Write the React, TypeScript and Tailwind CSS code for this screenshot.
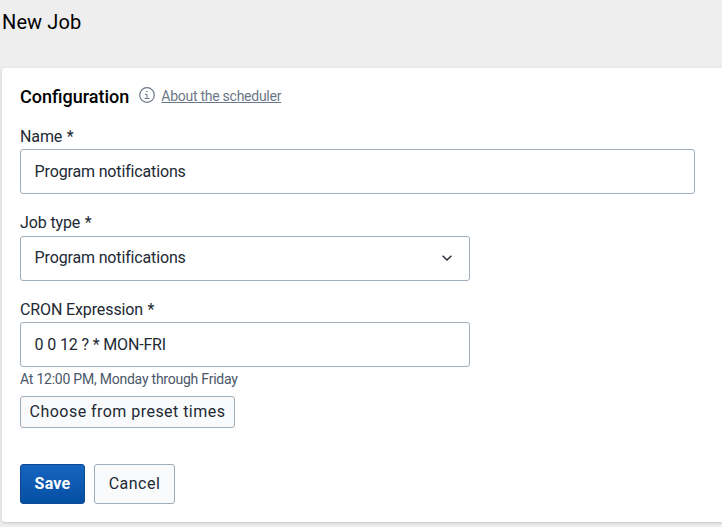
import React from 'react';

function Field({ label, value, wide, select }: { label: string; value: string; wide?: boolean; select?: boolean }) {
  return (
    <div className="flex flex-col">
      <label className={`h-[22px] text-base tracking-[-.12px] text-[#212934] ${select ? 'leading-[18px]' : 'leading-[19px]'}`}>
        {label}
        <span className="ml-[4.6px]">*</span>
      </label>
      <div className={`flex h-[45px] items-center justify-between rounded-[3px] border border-[#a0adba] bg-white pl-[13.6px] pr-[14px] text-base tracking-[-.15px] text-[#212934] ${wide ? 'w-[675px]' : 'w-[450px]'}`}>
        <span>{value}</span>
        {select && (
          <svg width="16" height="16" viewBox="0 0 16 16" fill="none" stroke="#212934" strokeWidth="1.4">
            <path d="M3.6 5.8l4.4 4.2 4.4-4.2" />
          </svg>
        )}
      </div>
    </div>
  );
}

export default function App() {
  return (
    <div className="h-[527px] w-[722px] overflow-hidden bg-[#eeeeee] font-['Roboto',sans-serif]">
      <h1 className="h-[68px] pl-[2px] pt-[10px] text-xl leading-6 tracking-[.12px] text-black">New Job</h1>
      <main className="ml-[2px] h-[454px] w-[730px] rounded-[3px] bg-white pl-[18px] pt-[17px] shadow-[0_1px_3px_rgba(64,75,90,0.25)]">
        <div className="flex h-[42px] items-start">
          <h2 className="text-lg font-medium leading-6 text-black">Configuration</h2>
          <svg className="ml-[10px] mt-[2px]" width="16" height="16" viewBox="0 0 16 16" fill="none" stroke="#6c7787">
            <circle cx="8" cy="8" r="7.3" strokeWidth="1.2" />
            <path d="M6 7.5h2v4M5.5 11.5h5M7 4.5h1.5" />
          </svg>
          <a className="ml-[6px] text-sm leading-[23px] tracking-[-.26px] text-[#6c7787] underline">About the scheduler</a>
        </div>
        <div className="flex flex-col gap-[19.6px]">
          <Field label="Name" value="Program notifications" wide />
          <Field label="Job type" value="Program notifications" select />
          <Field label="CRON Expression" value="0 0 12 ? * MON-FRI" />
        </div>
        <p className="mt-[3.8px] text-sm leading-4 tracking-[-.23px] text-[#4a5768]">At 12:00 PM, Monday through Friday</p>
        <button className="mt-[9px] block h-8 w-[215px] rounded-[3px] border border-[#a0adba] bg-[#f9fafb] text-base leading-[30px] tracking-[.46px] text-[#212934]">Choose from preset times</button>
        <div className="mt-9 flex gap-[9px] text-base">
          <button className="h-10 w-[65px] rounded-[3px] border border-[#0d4a95] bg-linear-to-b from-[#1565c0] to-[#0650a3] font-bold tracking-[.25px] text-white">Save</button>
          <button className="h-10 w-[81px] rounded-[3px] border border-[#a0adba] bg-[#f9fafb] tracking-[.5px] text-[#212934]">Cancel</button>
        </div>
      </main>
    </div>
  );
}
